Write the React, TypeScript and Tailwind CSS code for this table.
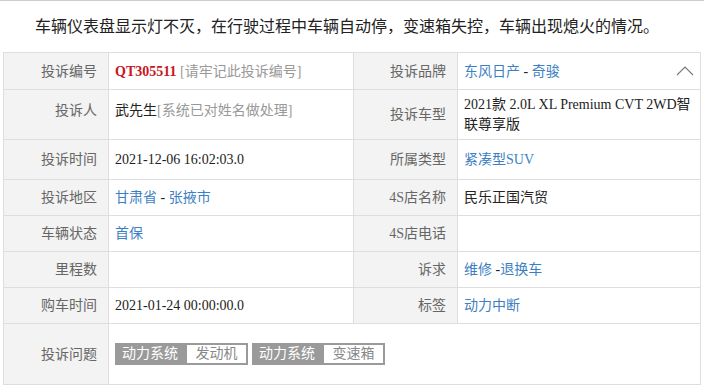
import React from 'react';

// Complaint detail sheet

const FONT = "font-['Liberation_Serif','Noto_Sans_CJK_SC',serif]";

const labelCls = 'bg-[#f3f3f3] text-[#666] text-right pr-[11px] border border-[#dedede] align-middle whitespace-nowrap';
const valueCls = 'bg-white text-[#222] pl-[6px] pr-2 border border-[#dedede] align-middle';
const linkCls = 'text-[#3d7fc4]';

function Tag({ head, tail }: { head: string; tail: string }) {
  return (
    <span className="inline-flex h-[22px] border-2 border-[#9a9a9a] text-[14px] leading-[18px]">
      <span className="bg-[#9a9a9a] text-white pl-[5px] flex items-center w-[70px]">{head}</span>
      <span className="bg-white text-[#888] flex items-center justify-center w-[59px]">{tail}</span>
    </span>
  );
}

export default function App() {
  return (
    <div className={`w-[704px] h-[387px] bg-white overflow-hidden ${FONT}`}>
      <div className="border-t border-[#cccccc] h-[52px] flex items-center pl-[35px] text-[16px] text-[#222]">
        车辆仪表盘显示灯不灭，在行驶过程中车辆自动停，变速箱失控，车辆出现熄火的情况。
      </div>
      <table className="ml-[3px] border-collapse table-fixed w-[697px] text-[14px]">
        <colgroup>
          <col className="w-[105px]" />
          <col className="w-[245px]" />
          <col className="w-[104px]" />
          <col className="w-[243px]" />
        </colgroup>
        <tbody>
          <tr className="h-[37px]">
            <td className={labelCls}>投诉编号</td>
            <td className={valueCls}>
              <span className="text-[#c8161d] font-bold">QT305511</span>{' '}
              <span className="text-[#999]">[请牢记此投诉编号]</span>
            </td>
            <td className={labelCls}>投诉品牌</td>
            <td className={valueCls}>
              <div className="flex items-center justify-between">
                <span>
                  <span className={linkCls}>东风日产</span> - <span className={linkCls}>奇骏</span>
                </span>
                <svg width="18" height="10" viewBox="0 0 18 10" className="mr-[-2px]">
                  <path d="M1 9 L9 1 L17 9" fill="none" stroke="#777" strokeWidth="1.1" />
                </svg>
              </div>
            </td>
          </tr>
          <tr className="h-[50px]">
            <td className={`${labelCls} pb-[8px]`}>投诉人</td>
            <td className={`${valueCls} pb-[8px]`}>
              武先生<span className="text-[#999]">[系统已对姓名做处理]</span>
            </td>
            <td className={labelCls}>投诉车型</td>
            <td className={`${valueCls} pr-0 leading-[20px]`}>2021款 2.0L XL Premium CVT 2WD智联尊享版</td>
          </tr>
          <tr className="h-[40px]">
            <td className={labelCls}>投诉时间</td>
            <td className={valueCls}>2021-12-06 16:02:03.0</td>
            <td className={labelCls}>所属类型</td>
            <td className={valueCls}>
              <span className={linkCls}>紧凑型SUV</span>
            </td>
          </tr>
          <tr className="h-[36px]">
            <td className={labelCls}>投诉地区</td>
            <td className={valueCls}>
              <span className={linkCls}>甘肃省</span> - <span className={linkCls}>张掖市</span>
            </td>
            <td className={labelCls}>4S店名称</td>
            <td className={valueCls}>民乐正国汽贸</td>
          </tr>
          <tr className="h-[36px]">
            <td className={labelCls}>车辆状态</td>
            <td className={valueCls}>
              <span className={linkCls}>首保</span>
            </td>
            <td className={labelCls}>4S店电话</td>
            <td className={valueCls}></td>
          </tr>
          <tr className="h-[36px]">
            <td className={labelCls}>里程数</td>
            <td className={valueCls}></td>
            <td className={labelCls}>诉求</td>
            <td className={valueCls}>
              <span className={linkCls}>维修</span> -<span className={linkCls}>退换车</span>
            </td>
          </tr>
          <tr className="h-[36px]">
            <td className={labelCls}>购车时间</td>
            <td className={valueCls}>2021-01-24 00:00:00.0</td>
            <td className={labelCls}>标签</td>
            <td className={valueCls}>
              <span className={linkCls}>动力中断</span>
            </td>
          </tr>
          <tr className="h-[61px]">
            <td className={labelCls}>投诉问题</td>
            <td className={`${valueCls} pl-[5px]`} colSpan={3}>
              <div className="flex gap-[4px]">
                <Tag head="动力系统" tail="发动机" />
                <Tag head="动力系统" tail="变速箱" />
              </div>
            </td>
          </tr>
        </tbody>
      </table>
    </div>
  );
}
